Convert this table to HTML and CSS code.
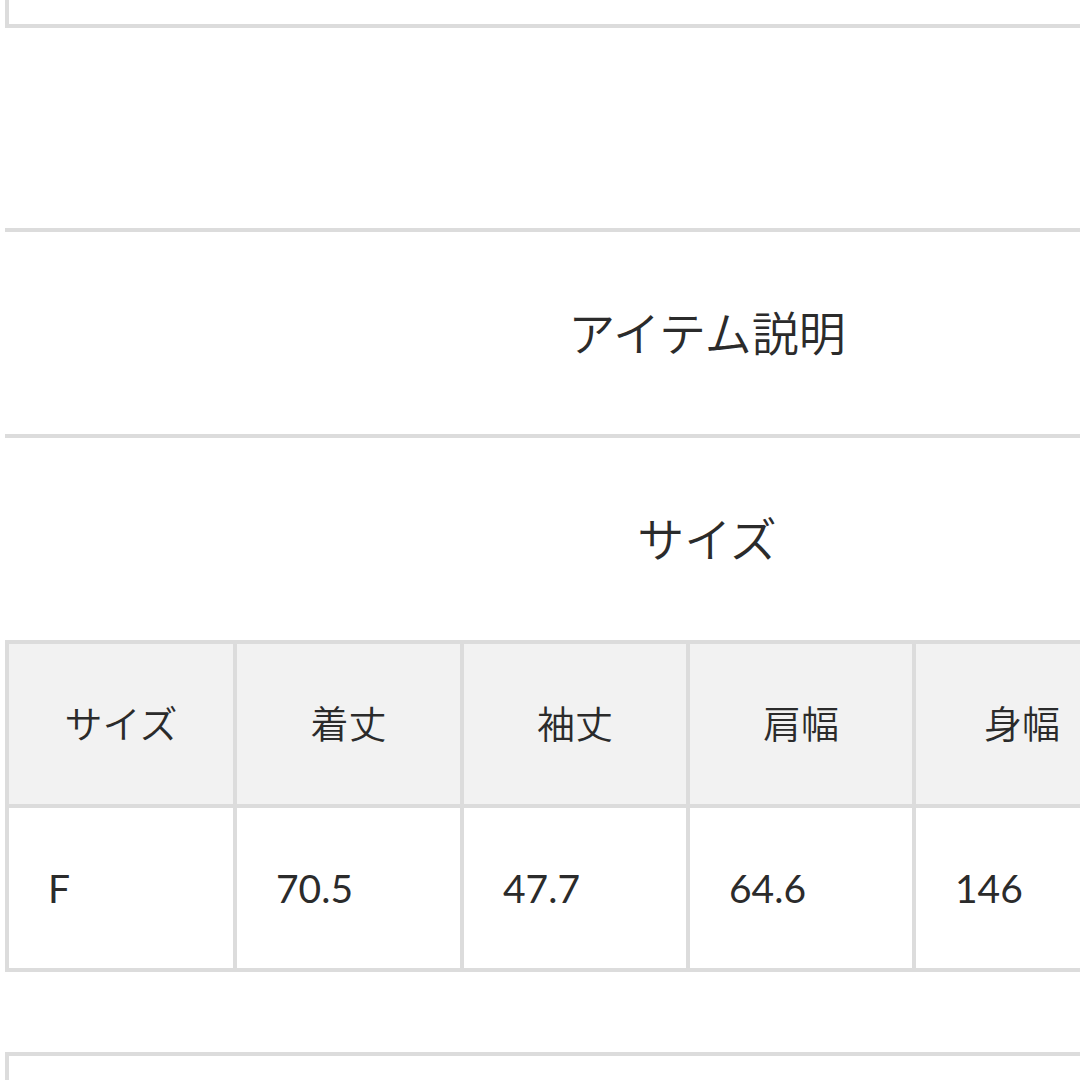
FILE: index.html
```html
<!DOCTYPE html>
<html lang="ja">
<head>
<meta charset="utf-8">
<title>アイテム説明</title>
<link rel="stylesheet" href="styles.css">
</head>
<body>
<div class="page">
  <div class="top-box"></div>
  <div class="spacer"></div>
  <section class="section">
    <h2 class="section-title">アイテム説明</h2>
  </section>
  <section class="section">
    <h2 class="section-title">サイズ</h2>
  </section>
  <div class="size-table">
    <div class="cell head">サイズ</div>
    <div class="cell head">着丈</div>
    <div class="cell head">袖丈</div>
    <div class="cell head">肩幅</div>
    <div class="cell head">身幅</div>
    <div class="cell body">F</div>
    <div class="cell body">70.5</div>
    <div class="cell body">47.7</div>
    <div class="cell body">64.6</div>
    <div class="cell body">146</div>
  </div>
  <div class="bottom-box"></div>
</div>
</body>
</html>
```

FILE: styles.css
```css
html, body {
  margin: 0;
  padding: 0;
  background: #ffffff;
  overflow: hidden;
}

body {
  width: 1080px;
  height: 1080px;
  font-family: "Lato", "Noto Sans CJK JP", sans-serif;
  color: #333333;
}

.page {
  width: 1404px;
  margin-left: 5px;
}

.top-box {
  height: 24px;
  border: 4px solid #dcdcdc;
  border-top: none;
}

.spacer {
  height: 200px;
}

.section {
  border-top: 4px solid #dcdcdc;
  height: 202px;
  display: flex;
  align-items: center;
  justify-content: center;
}

.section-title {
  margin: 0 0 6px;
  font-family: "Noto Sans CJK JP", sans-serif;
  font-weight: 350;
  font-size: 47px;
  color: #2b2b2b;
  line-height: 1;
}

.size-table {
  display: grid;
  grid-template-columns: 224px 223px 222px 222px 212px;
  grid-auto-rows: 160px;
  gap: 4px;
  padding: 4px;
  background: #dcdcdc;
  width: max-content;
}

.cell {
  display: flex;
  align-items: center;
  font-size: 39px;
  font-family: "Lato", "Noto Sans CJK JP", sans-serif;
  color: #2b2b2b;
}

.cell.head {
  background: #f2f2f2;
  justify-content: center;
  padding-bottom: 6px;
  font-family: "Noto Sans CJK JP", sans-serif;
  font-weight: 350;
  font-size: 38px;
}

.cell.body {
  background: #ffffff;
  padding-left: 39px;
}

.bottom-box {
  margin-top: 80px;
  height: 100px;
  border: 4px solid #dcdcdc;
  border-bottom: none;
}
```
